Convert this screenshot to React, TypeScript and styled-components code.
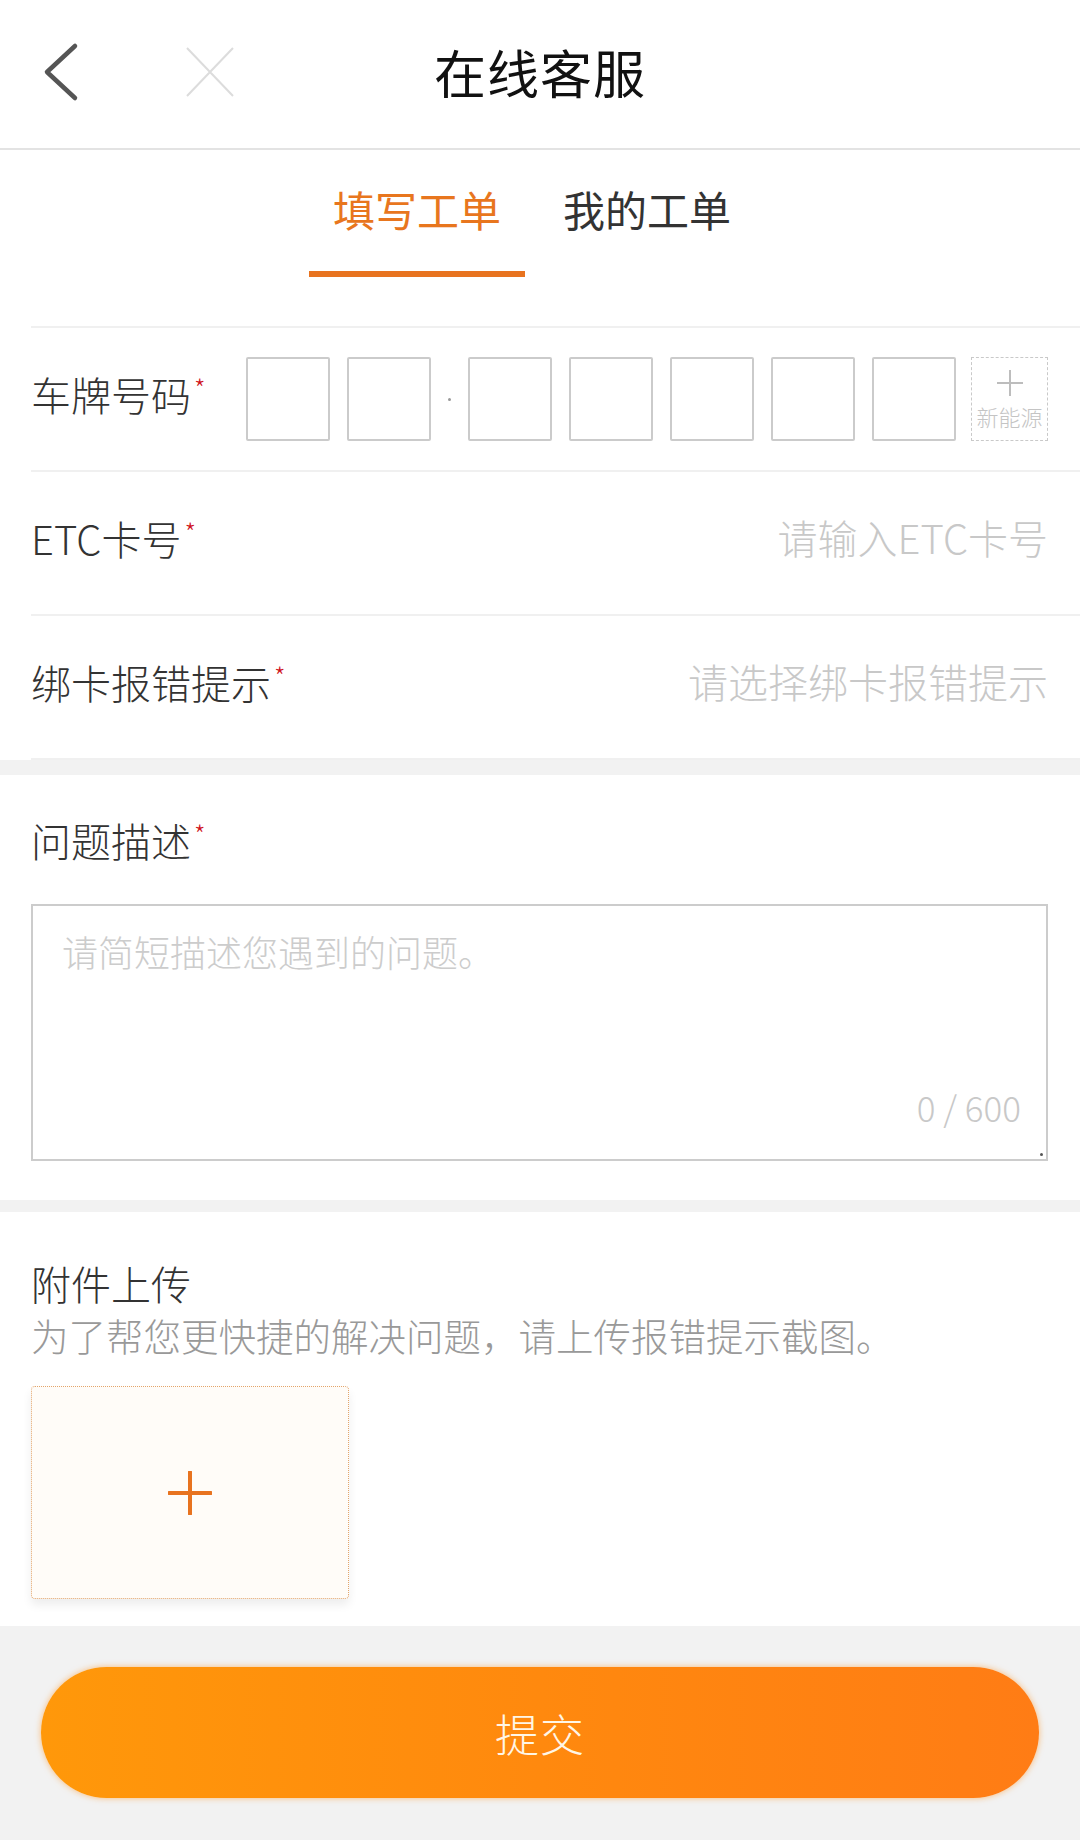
import React from "react";
import styled, { createGlobalStyle } from "styled-components";

const FONT = `"Noto Sans CJK SC", "Noto Sans", "Liberation Sans", sans-serif`;

const Global = createGlobalStyle`
  html, body { margin: 0; padding: 0; background: #ffffff; }
  body { font-family: ${FONT}; -webkit-font-smoothing: antialiased; }
  * { box-sizing: border-box; }
`;

const Page = styled.div`
  width: 1080px;
  min-height: 1840px;
  display: flex;
  flex-direction: column;
  background: #f2f2f2;
`;

const Header = styled.header`
  height: 150px;
  display: grid;
  grid-template-columns: 1fr auto 1fr;
  align-items: center;
  background: #fff;
  border-bottom: 2px solid #e3e3e3;
  padding-bottom: 4px;
`;

const HeaderLeft = styled.div`
  display: flex;
  align-items: center;
  gap: 103px;
  padding-left: 42px;
`;

const IconButton = styled.button`
  border: 0;
  background: transparent;
  padding: 0;
  display: flex;
  align-items: center;
  cursor: pointer;
`;

const Title = styled.h1`
  margin: 0;
  font-size: 52px;
  line-height: 60px;
  font-weight: 400;
  color: #111;
  letter-spacing: 1px;
`;

const TabBar = styled.nav`
  height: 176px;
  display: flex;
  justify-content: center;
  gap: 14px;
  padding-right: 16px;
  background: #fff;
`;

const Tab = styled.div<{ $active?: boolean }>`
  width: 216px;
  display: flex;
  flex-direction: column;
  align-items: center;
  padding-top: 33px;
  font-size: 42px;
  line-height: 52px;
  color: ${(p) => (p.$active ? "#e8761e" : "#333")};
  &::after {
    content: "";
    display: block;
    width: 100%;
    height: 6px;
    margin-top: 36px;
    background: ${(p) => (p.$active ? "#e8731f" : "transparent")};
  }
`;

const Section = styled.section`
  background: #fff;
`;

const FormList = styled.div`
  margin-left: 31px;
  border-bottom: 2px solid #f0f0f0;
`;

const Row = styled.div`
  height: 144px;
  border-top: 2px solid #f0f0f0;
  display: flex;
  align-items: center;
  padding-right: 32px;
`;

const Label = styled.span`
  font-size: 40px;
  line-height: 50px;
  font-weight: 300;
  color: #333;
  white-space: nowrap;
`;

const RowLabel = styled(Label)<{ $width?: number }>`
  margin-bottom: 10px;
  ${(p) => (p.$width ? `flex: 0 0 ${p.$width}px;` : "")}
`;

const Star = styled.span`
  display: inline-block;
  vertical-align: top;
  color: #cf1322;
  font-size: 26px;
  line-height: 26px;
  padding-top: 6px;
  margin-left: 3px;
`;

const TextInput = styled.input`
  flex: 1;
  min-width: 0;
  border: 0;
  outline: 0;
  background: transparent;
  text-align: right;
  font-family: ${FONT};
  font-size: 40px;
  line-height: 50px;
  font-weight: 300;
  color: #333;
  padding: 0;
  margin-bottom: 12px;
  &::placeholder {
    color: #c8c8c8;
  }
`;

const PlateGroup = styled.div`
  display: flex;
  align-items: center;
  gap: 17px;
`;

const PlateCell = styled.div`
  width: 84px;
  height: 84px;
  border: 2px solid #cbcbcb;
  border-radius: 2px;
  background: #fff;
`;

const PlateDot = styled.span`
  width: 3px;
  height: 3px;
  border-radius: 50%;
  background: #999;
`;

const NewEnergy = styled.div`
  width: 77px;
  height: 84px;
  margin-left: -2px;
  border: 1px dashed #c9c9c9;
  display: flex;
  flex-direction: column;
  align-items: center;
  justify-content: center;
  gap: 6px;
  color: #c4c4c4;
  font-size: 22px;
  line-height: 26px;
  font-weight: 300;
`;

const Band = styled.div<{ $h: number }>`
  height: ${(p) => p.$h}px;
  background: #f2f2f2;
`;

const DescSection = styled.section`
  background: #fff;
  padding: 40px 32px 39px 31px;
  display: flex;
  flex-direction: column;
`;

const TextBox = styled.div`
  margin-top: 39px;
  height: 257px;
  border: 2px solid #cccccc;
  display: flex;
  flex-direction: column;
  padding: 20px 25px 32px 29px;
  position: relative;
`;

const Area = styled.textarea`
  flex: 1;
  border: 0;
  outline: 0;
  resize: none;
  padding: 0;
  font-family: ${FONT};
  font-size: 36px;
  line-height: 50px;
  font-weight: 300;
  color: #333;
  &::placeholder {
    color: #cccccc;
  }
`;

const Counter = styled.div`
  align-self: flex-end;
  font-size: 35px;
  line-height: 40px;
  font-weight: 300;
  color: #c8c8c8;
`;

const Grip = styled.span`
  position: absolute;
  right: 3px;
  bottom: 3px;
  width: 3px;
  height: 3px;
  border-radius: 50%;
  background: #555;
`;

const UploadSection = styled.section`
  background: #fff;
  padding: 46px 32px 27px 31px;
  display: flex;
  flex-direction: column;
`;

const Hint = styled.p`
  margin: 4px 0 0;
  font-size: 37.5px;
  line-height: 46px;
  font-weight: 300;
  color: #999;
`;

const UploadBox = styled.div`
  margin-top: 28px;
  width: 318px;
  height: 213px;
  background: #fffcf8;
  border: 1px dotted #e3a56c;
  border-radius: 4px;
  box-shadow: 0 6px 10px rgba(0, 0, 0, 0.07);
  display: flex;
  align-items: center;
  justify-content: center;
`;

const Footer = styled.footer`
  flex: 1;
  background: #f2f2f2;
  padding: 41px 41px 40px 41px;
`;

const SubmitButton = styled.button`
  width: 998px;
  height: 131px;
  border: 0;
  border-radius: 66px;
  background: linear-gradient(90deg, #ff980a 0%, #ff890e 50%, #ff7c15 100%);
  box-shadow: 0 0 6px rgba(255, 140, 20, 0.55);
  color: #fff6e6;
  font-family: ${FONT};
  font-size: 44px;
  font-weight: 300;
  letter-spacing: 1px;
  cursor: pointer;
`;

const BackIcon = () => (
  <svg width="40" height="60" viewBox="0 0 40 60" fill="none">
    <path d="M33 4 L5 30 L33 56" stroke="#555" strokeWidth="4.5" strokeLinecap="round" strokeLinejoin="round" />
  </svg>
);

const CloseIcon = () => (
  <svg width="50" height="52" viewBox="0 0 50 52" fill="none">
    <path d="M2 2 L48 50 M48 2 L2 50" stroke="#dcdcdc" strokeWidth="2" />
  </svg>
);

const SmallPlus = () => (
  <svg width="28" height="28" viewBox="0 0 28 28">
    <path d="M14 1 V27 M1 14 H27" stroke="#bdbdbd" strokeWidth="2" />
  </svg>
);

const OrangePlus = () => (
  <svg width="44" height="44" viewBox="0 0 44 44">
    <path d="M22 1 V43 M1 22 H43" stroke="#e8731f" strokeWidth="4" strokeLinecap="round" />
  </svg>
);

export default function App() {
  return (
    <>
      <Global />
      <Page>
        <Header>
          <HeaderLeft>
            <IconButton aria-label="返回">
              <BackIcon />
            </IconButton>
            <IconButton aria-label="关闭">
              <CloseIcon />
            </IconButton>
          </HeaderLeft>
          <Title>在线客服</Title>
          <div />
        </Header>

        <TabBar>
          <Tab $active>填写工单</Tab>
          <Tab>我的工单</Tab>
        </TabBar>

        <Section>
          <FormList>
            <Row>
              <RowLabel $width={215}>
                车牌号码<Star>*</Star>
              </RowLabel>
              <PlateGroup>
                <PlateCell />
                <PlateCell />
                <PlateDot />
                <PlateCell />
                <PlateCell />
                <PlateCell />
                <PlateCell />
                <PlateCell />
                <NewEnergy>
                  <SmallPlus />
                  <span>新能源</span>
                </NewEnergy>
              </PlateGroup>
            </Row>
            <Row>
              <RowLabel>
                ETC卡号<Star>*</Star>
              </RowLabel>
              <TextInput placeholder="请输入ETC卡号" />
            </Row>
            <Row>
              <RowLabel>
                绑卡报错提示<Star>*</Star>
              </RowLabel>
              <TextInput placeholder="请选择绑卡报错提示" readOnly />
            </Row>
          </FormList>
        </Section>

        <Band $h={15} />

        <DescSection>
          <Label>
            问题描述<Star>*</Star>
          </Label>
          <TextBox>
            <Area placeholder="请简短描述您遇到的问题。" />
            <Counter>0 / 600</Counter>
            <Grip />
          </TextBox>
        </DescSection>

        <Band $h={12} />

        <UploadSection>
          <Label>附件上传</Label>
          <Hint>为了帮您更快捷的解决问题，请上传报错提示截图。</Hint>
          <UploadBox>
            <OrangePlus />
          </UploadBox>
        </UploadSection>

        <Footer>
          <SubmitButton>提交</SubmitButton>
        </Footer>
      </Page>
    </>
  );
}
